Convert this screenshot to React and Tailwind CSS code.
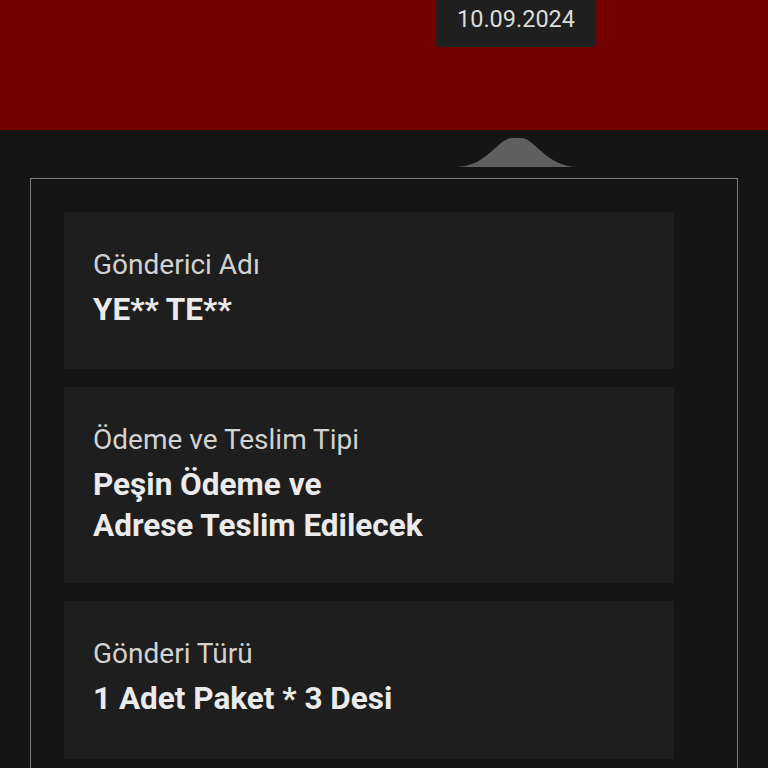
import React from "react";

function Card({ label, children, className = "" }) {
  return (
    <div className={`bg-[#1e1e1e] pl-[29px] pr-4 pt-[37px] ${className}`}>
      <div className="text-[28px] leading-[32px] text-[#d2d2d2]">{label}</div>
      <div className="mt-[8px] text-[31.5px] leading-[41px] font-bold text-[#ebebeb]">{children}</div>
    </div>
  );
}

export default function App() {
  return (
    <div className="w-[768px] h-[768px] overflow-hidden bg-[#151515] font-['Roboto',sans-serif]">
      <div className="h-[130px] bg-[#750000] flex">
        <div className="ml-[436px] w-[160px] h-[47px] bg-[#1f1f1f] rounded-b-[3px] flex justify-center pt-[4px] text-[23.5px] leading-[30px] text-[#dcdcdc]">
          10.09.2024
        </div>
      </div>
      <div className="h-[48px] flex items-start pt-[8px]">
        <svg width="123" height="30" viewBox="0 0 123 30" className="ml-[455px]">
          <path d="M0,29 C32,29 43,0 57,0 L66,0 C80,0 91,29 123,29 Z" fill="#5f5f5f" />
        </svg>
      </div>
      <div className="mx-[30px] border border-[#7a7a7a] bg-[#141414] pl-[33px] pr-[63px] pt-[33px] pb-6 flex flex-col gap-[18px]">
        <Card label="Gönderici Adı" className="h-[157px]">YE** TE**</Card>
        <Card label="Ödeme ve Teslim Tipi" className="h-[196px]">
          Peşin Ödeme ve
          <br />
          Adrese Teslim Edilecek
        </Card>
        <Card label="Gönderi Türü" className="h-[158px]">1 Adet Paket * 3 Desi</Card>
      </div>
    </div>
  );
}
